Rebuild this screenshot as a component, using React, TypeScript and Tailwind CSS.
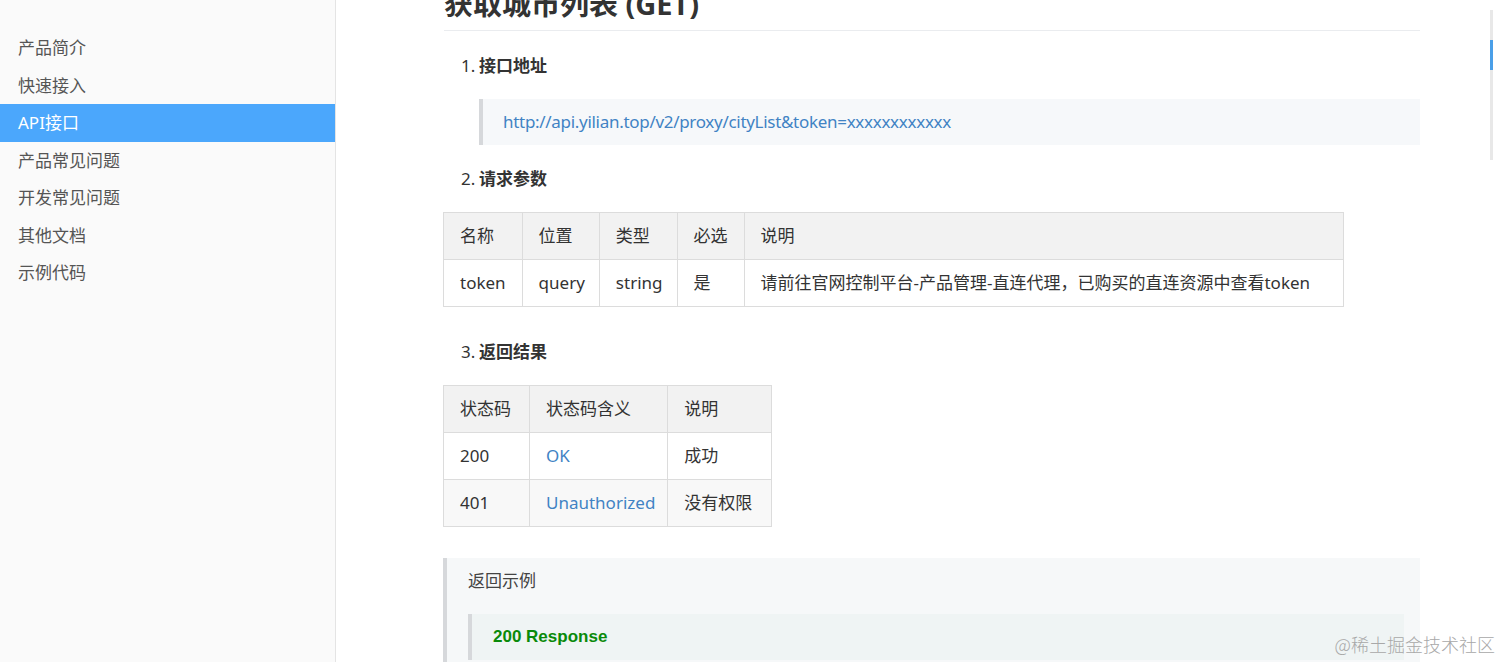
const navItems = ["产品简介", "快速接入", "API接口", "产品常见问题", "开发常见问题", "其他文档", "示例代码"];

const params = [
  { name: "token", pos: "query", type: "string", req: "是", desc: "请前往官网控制平台-产品管理-直连代理，已购买的直连资源中查看token" },
];

const codes = [
  { code: "200", meaning: "OK", desc: "成功" },
  { code: "401", meaning: "Unauthorized", desc: "没有权限" },
];

const font = "font-['Noto_Sans','Noto_Sans_CJK_SC',sans-serif]";

function Step({ n, title }: { n: number; title: string }) {
  return (
    <div className="flex items-center h-[24px] pl-[18px] text-[17px] text-[#333]">
      <span className="w-[18px]">{n}.</span>
      <span className="font-bold">{title}</span>
    </div>
  );
}

const th = "border border-[#dcdcdc] px-[16px] py-[12px] leading-[22px] font-normal text-left";
const td = "border border-[#dcdcdc] px-[16px] py-[12px] leading-[22px]";

export default function App() {
  return (
    <div className={`relative flex h-[662px] w-[1501px] overflow-hidden bg-white ${font}`}>
      {/* Sidebar */}
      <aside className="w-[336px] shrink-0 border-r border-[#e4e4e4] bg-[#fafafa] pt-[29px]">
        {navItems.map((item) => (
          <div
            key={item}
            className={
              item === "API接口"
                ? "flex h-[37.5px] items-center bg-[#4ba7fc] pl-[18px] text-[17px] text-white"
                : "flex h-[37.5px] items-center pl-[18px] text-[17px] text-[#555]"
            }
          >
            {item}
          </div>
        ))}
      </aside>

      {/* Main */}
      <main className="ml-[107px] w-[977px] shrink-0">
        <h2 className="-mt-[16px] ml-px border-b border-[#eaecef] pb-[6px] text-[29px] font-bold leading-[40px] text-[#333]">
          获取城市列表 (GET)
        </h2>

        <div className="mt-[23px]">
          <Step n={1} title="接口地址" />
        </div>
        <div className="ml-[36px] mt-[21px] border-l-4 border-[#d6d8db] bg-[#f6f8fa] py-[11px] pl-[20px] text-[17px] leading-[24px] tracking-[-0.3px] text-[#4183c4]">
          http://api.yilian.top/v2/proxy/cityList&amp;token=xxxxxxxxxxxx
        </div>

        <div className="mt-[22px]">
          <Step n={2} title="请求参数" />
        </div>
        <table className="mt-[21px] border-collapse text-[17px] text-[#333]">
          <thead>
            <tr className="bg-[#f2f2f2]">
              <th className={`${th} py-[12.5px]`}>名称</th>
              <th className={`${th} py-[12.5px] pr-[14px]`}>位置</th>
              <th className={`${th} py-[12.5px] pr-[14px]`}>类型</th>
              <th className={`${th} py-[12.5px]`}>必选</th>
              <th className={`${th} py-[12.5px] pr-[33px]`}>说明</th>
            </tr>
          </thead>
          <tbody>
            {params.map((p) => (
              <tr key={p.name} className="bg-white">
                <td className={td}>{p.name}</td>
                <td className={`${td} pr-[14px]`}>{p.pos}</td>
                <td className={`${td} pr-[14px]`}>{p.type}</td>
                <td className={td}>{p.req}</td>
                <td className={`${td} pr-[33px]`}>{p.desc}</td>
              </tr>
            ))}
          </tbody>
        </table>

        <div className="mt-[33px]">
          <Step n={3} title="返回结果" />
        </div>
        <table className="mt-[21px] border-collapse text-[17px] text-[#333]">
          <thead>
            <tr className="bg-[#f2f2f2]">
              <th className={`${th} pr-[18px]`}>状态码</th>
              <th className={`${th} pr-[12px]`}>状态码含义</th>
              <th className={`${th} pr-[19px]`}>说明</th>
            </tr>
          </thead>
          <tbody>
            {codes.map((c, i) => (
              <tr key={c.code} className={i % 2 ? "bg-[#f8f8f8]" : "bg-white"}>
                <td className={`${td} pr-[18px] ${i === 0 ? "py-[12.5px]" : ""}`}>{c.code}</td>
                <td className={`${td} pr-[12px] text-[#4183c4] ${i === 0 ? "py-[12.5px]" : ""}`}>{c.meaning}</td>
                <td className={`${td} pr-[19px] ${i === 0 ? "py-[12.5px]" : ""}`}>{c.desc}</td>
              </tr>
            ))}
          </tbody>
        </table>

        {/* Response example */}
        <div className="mt-[31px] border-l-4 border-[#d6d8db] bg-[#f6f8f9] pl-[21px] pr-[16px] pt-[11px] pb-[20px]">
          <div className="text-[17px] leading-[24px] text-[#444]">返回示例</div>
          <div className="mt-[21px] border-l-4 border-[#d6d8db] bg-[#eff4f4] py-[11px] pl-[21px]">
            <div className="font-['Liberation_Sans',sans-serif] text-[17px] font-bold leading-[24px] text-[#0a8a0a]">
              200 Response
            </div>
          </div>
        </div>
      </main>

      {/* TOC indicator */}
      <div className="absolute left-[1490px] top-[10px] h-[150px] w-[3px] bg-[#e8e8e8]">
        <div className="mt-[30px] h-[30px] w-[3px] bg-[#4a9fe8]" />
      </div>

      {/* Watermark */}
      <div className="absolute bottom-[6px] right-[6px] text-[18px] leading-[24px] text-[#a8a8a8] font-['Noto_Sans_CJK_SC',sans-serif] font-light">
        @稀土掘金技术社区
      </div>
    </div>
  );
}
